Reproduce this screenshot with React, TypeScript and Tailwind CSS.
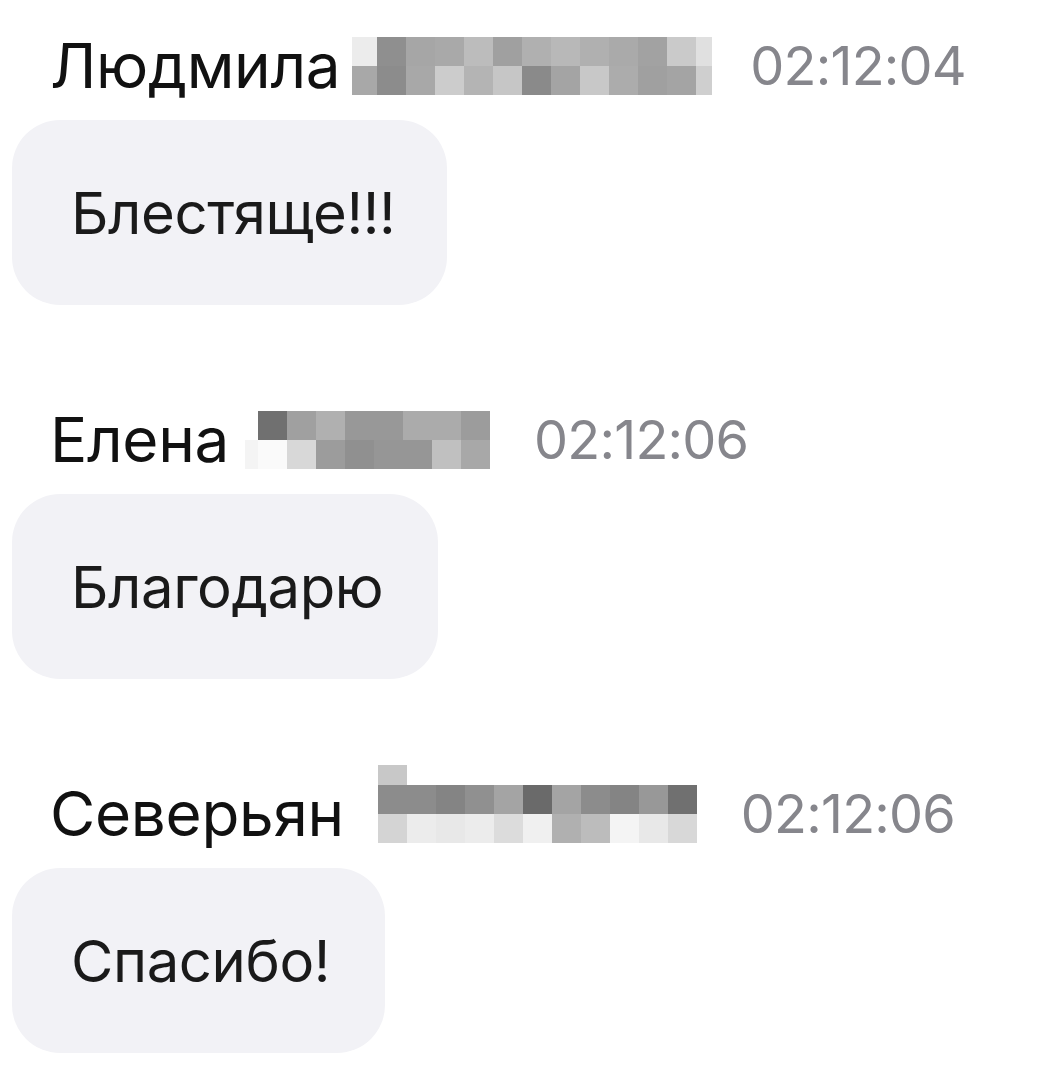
import React from "react";

interface Tile {
  w: string;
  bg: string;
}

interface Message {
  name: string;
  time: string;
  text: string;
  blockGap: string;
  timeGap: string;
  blockTop?: Tile[];
  blockRows: Tile[][];
  bubbleW: string;
}

const t = (bg: string, w = "w-[29px]"): Tile => ({ w, bg });

const messages: Message[] = [
  {
    name: "Людмила",
    time: "02:12:04",
    text: "Блестяще!!!",
    blockGap: "ml-[12px]",
    timeGap: "ml-[38px]",
    blockRows: [
      [
        t("bg-[#ececec]", "w-[25px]"),
        t("bg-[#8f8f8f]"),
        t("bg-[#a6a6a6]"),
        t("bg-[#a9a9a9]"),
        t("bg-[#bcbcbc]"),
        t("bg-[#a0a0a0]"),
        t("bg-[#b0b0b0]"),
        t("bg-[#b8b8b8]"),
        t("bg-[#b0b0b0]"),
        t("bg-[#aaaaaa]"),
        t("bg-[#a2a2a2]"),
        t("bg-[#cacaca]"),
        t("bg-[#e0e0e0]", "w-[16px]"),
      ],
      [
        t("bg-[#a8a8a8]", "w-[25px]"),
        t("bg-[#8c8c8c]"),
        t("bg-[#a8a8a8]"),
        t("bg-[#cccccc]"),
        t("bg-[#b4b4b4]"),
        t("bg-[#c6c6c6]"),
        t("bg-[#8a8a8a]"),
        t("bg-[#a4a4a4]"),
        t("bg-[#c8c8c8]"),
        t("bg-[#acacac]"),
        t("bg-[#a0a0a0]"),
        t("bg-[#a4a4a4]"),
        t("bg-[#cfcfcf]", "w-[16px]"),
      ],
    ],
    bubbleW: "w-[435px]",
  },
  {
    name: "Елена",
    time: "02:12:06",
    text: "Благодарю",
    blockGap: "ml-[16px]",
    timeGap: "ml-[44px]",
    blockRows: [
      [
        t("bg-white", "w-[13px]"),
        t("bg-[#707070]"),
        t("bg-[#a0a0a0]"),
        t("bg-[#b0b0b0]"),
        t("bg-[#989898]"),
        t("bg-[#989898]"),
        t("bg-[#ababab]"),
        t("bg-[#ababab]"),
        t("bg-[#9c9c9c]"),
      ],
      [
        t("bg-[#f4f4f4]", "w-[13px]"),
        t("bg-[#fafafa]"),
        t("bg-[#d8d8d8]"),
        t("bg-[#9c9c9c]"),
        t("bg-[#909090]"),
        t("bg-[#969696]"),
        t("bg-[#969696]"),
        t("bg-[#c0c0c0]"),
        t("bg-[#a8a8a8]"),
      ],
    ],
    bubbleW: "w-[426px]",
  },
  {
    name: "Северьян",
    time: "02:12:06",
    text: "Спасибо!",
    blockGap: "ml-[34px]",
    timeGap: "ml-[44px]",
    blockTop: [t("bg-[#c8c8c8]")],
    blockRows: [
      [
        t("bg-[#8c8c8c]"),
        t("bg-[#8c8c8c]"),
        t("bg-[#848484]"),
        t("bg-[#909090]"),
        t("bg-[#a4a4a4]"),
        t("bg-[#6a6a6a]"),
        t("bg-[#a4a4a4]"),
        t("bg-[#8c8c8c]"),
        t("bg-[#848484]"),
        t("bg-[#989898]"),
        t("bg-[#707070]"),
      ],
      [
        t("bg-[#d4d4d4]"),
        t("bg-[#ececec]"),
        t("bg-[#e8e8e8]"),
        t("bg-[#ececec]"),
        t("bg-[#dcdcdc]"),
        t("bg-[#f0f0f0]"),
        t("bg-[#b0b0b0]"),
        t("bg-[#bcbcbc]"),
        t("bg-[#f4f4f4]"),
        t("bg-[#e8e8e8]"),
        t("bg-[#d8d8d8]"),
      ],
    ],
    bubbleW: "w-[373px]",
  },
];

// pixelated surname, as the screenshot has it
const Pixelated = ({ top, rows }: { top?: Tile[]; rows: Tile[][] }) => (
  <div className={top ? "flex flex-col -mt-[20px]" : "flex flex-col"}>
    {top && (
      <div className="flex h-[20px]">
        {top.map((tile, i) => (
          <div key={i} className={`${tile.w} h-full ${tile.bg}`} />
        ))}
      </div>
    )}
    {rows.map((row, r) => (
      <div key={r} className="flex h-[29px]">
        {row.map((tile, i) => (
          <div key={i} className={`${tile.w} h-full ${tile.bg}`} />
        ))}
      </div>
    ))}
  </div>
);

export default function App() {
  return (
    <div
      className="w-[1038px] h-[1080px] bg-white overflow-hidden pt-[36px] flex flex-col gap-[105px]"
      style={{ fontFamily: "Inter, 'Liberation Sans', sans-serif" }}
    >
      {messages.map((m, idx) => (
        <div key={idx} className="flex flex-col">
          <div className="flex items-center h-[60px] pl-[50px]">
            <span className="text-[62px] leading-none text-[#111111] tracking-[-0.3px]">
              {m.name}
            </span>
            <div className={m.blockGap}>
              <Pixelated top={m.blockTop} rows={m.blockRows} />
            </div>
            <span className={`${m.timeGap} text-[54px] leading-none text-[#86868c] tracking-[-0.8px]`}>
              {m.time}
            </span>
          </div>
          <div
            className={`${m.bubbleW} ml-[12px] mt-[24px] h-[185px] rounded-[48px] bg-[#f2f2f6] flex items-center pl-[59px]`}
          >
            <span className="text-[58px] leading-none text-[#1a1a1a] tracking-[-0.4px]">
              {m.text}
            </span>
          </div>
        </div>
      ))}
    </div>
  );
}
